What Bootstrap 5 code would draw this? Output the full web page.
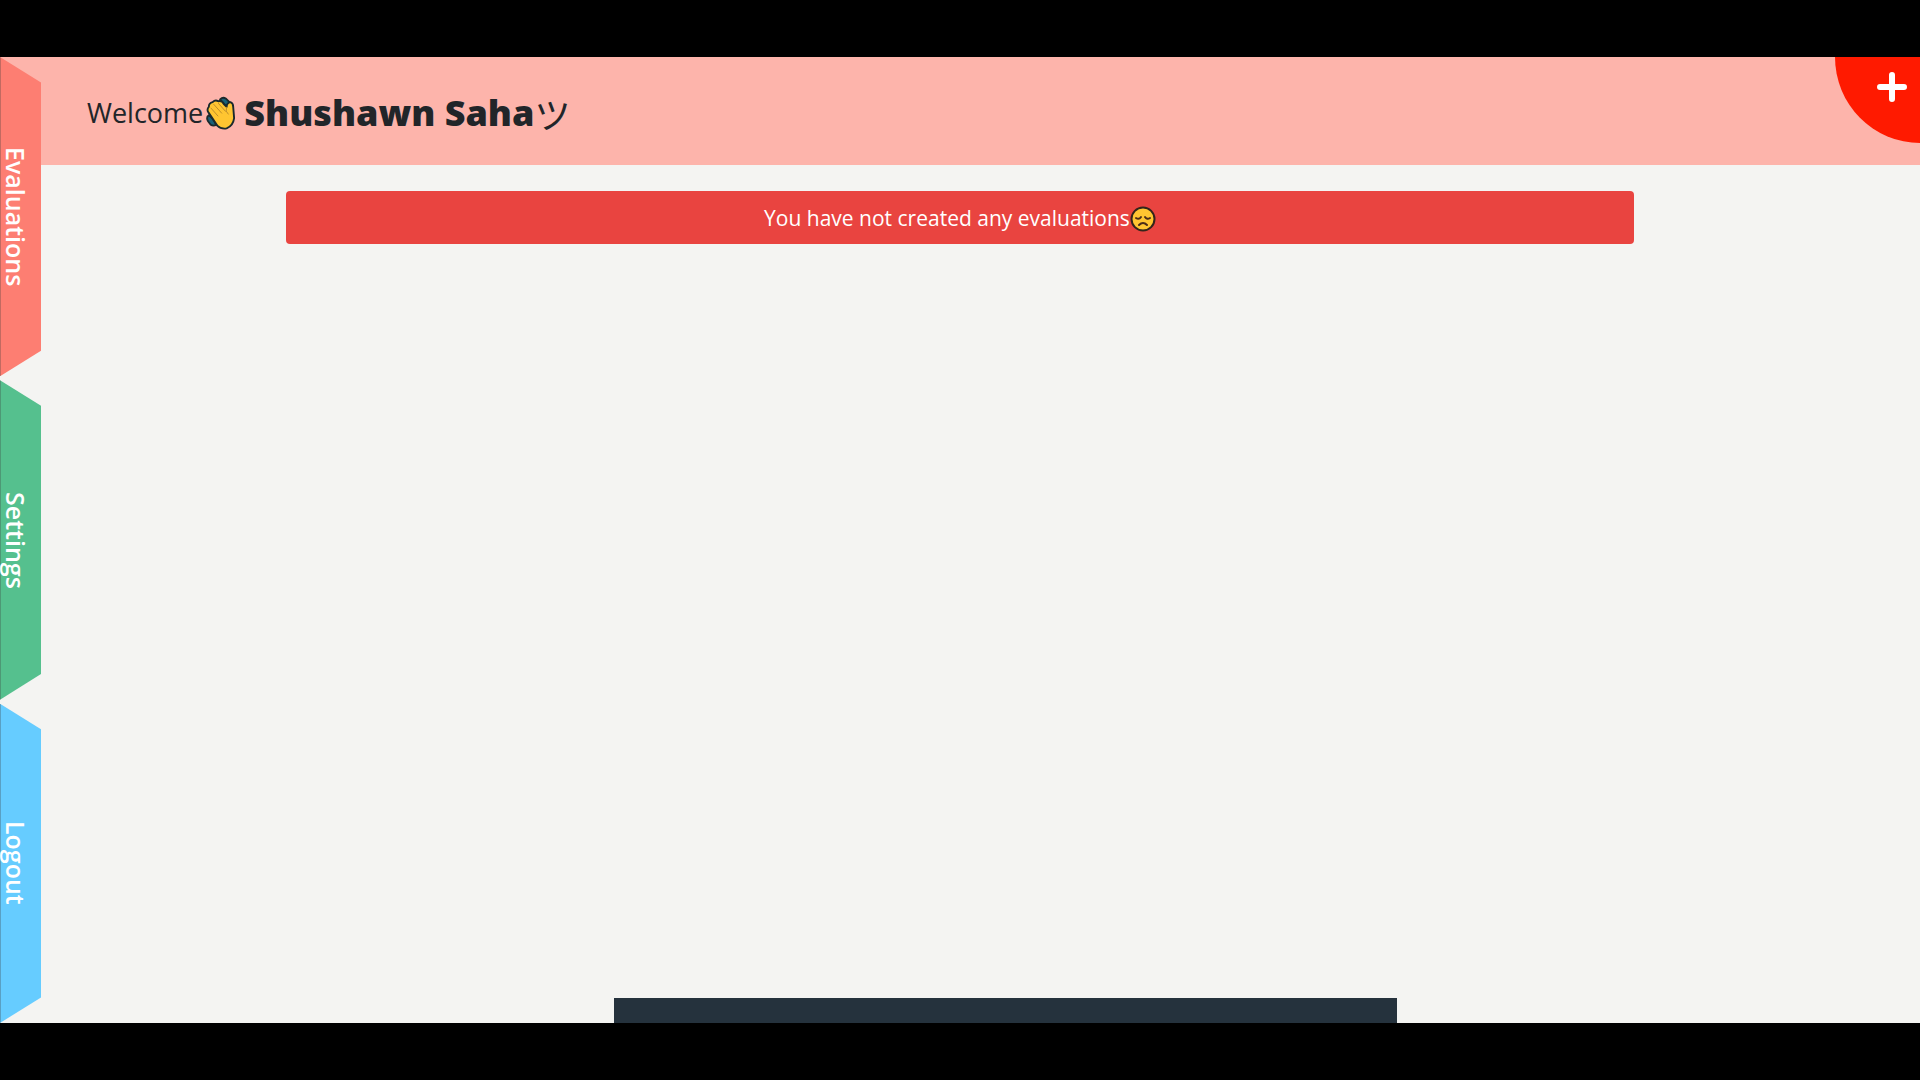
<!DOCTYPE html>
<html lang="en">
<head>
<meta charset="utf-8">
<meta name="viewport" content="width=device-width, initial-scale=1">
<title>Evaluations</title>
<link href="https://cdn.jsdelivr.net/npm/bootstrap@5.3.0/dist/css/bootstrap.min.css" rel="stylesheet">
<style>
  body { background: #000; color: #212529; font-family: "Open Sans", "Noto Sans", "Noto Sans CJK JP", sans-serif; padding: 57px 0; }
  .stage { background: #f4f4f2; }
  .topbar { background: #fdb4ab; min-height: 108px; padding: 3px 120px 0 87px; }
  .greeting { font-size: 27px; line-height: 36px; font-weight: 500; }
  .greeting svg { width: 30px; height: 35px; margin: 0 8px 0 3px; }
  .owner { font-size: 36px; font-weight: 800; line-height: 44px; }
  .owner-mark { font-family: "Noto Sans CJK JP", sans-serif; font-size: 36px; font-weight: 400; line-height: 44px; }
  .side { width: 41px; gap: 4px; }
  .side a { color: #fff; font-size: 25px; font-weight: 600; line-height: 28px; writing-mode: vertical-rl; clip-path: polygon(0 0, 100% 8%, 100% 92%, 0 100%); flex: 1 1 0; padding-right: 10px; border-left: 1px solid rgba(60, 60, 60, .3); }
  .tab-evaluations { background: #fd7e72; }
  .tab-settings { background: #55c08e; }
  .tab-logout { background: #66ccff; }
  .add-btn { width: 85px; height: 86px; background: #ff1a00; border: 0; border-radius: 0 0 0 100%; padding: 0 13px 26px 0; }
  .content-wrap { max-width: 1348px; margin-top: 26px; }
  .notice { background: #e94440; color: #fff; font-size: 21px; line-height: 27px; padding: 14px 12px 12px; border-radius: 4px; }
  .notice svg { width: 26px; height: 26px; }
  .drawer { width: 783px; max-width: 80%; height: 25px; background: #25323d; margin-left: 32%; }
</style>
<script src="https://cdn.jsdelivr.net/npm/bootstrap@5.3.0/dist/js/bootstrap.bundle.min.js"></script>
</head>
<body class="min-vh-100 d-flex flex-column">
<div class="stage position-relative flex-grow-1 d-flex flex-column overflow-hidden">
  <header class="topbar d-flex align-items-center">
    <h1 class="greeting d-flex align-items-center m-0">
      <span>Welcome</span>
      <svg viewBox="0 0 32 36" aria-hidden="true">
        <g stroke="#1b2a2d" stroke-width="2" stroke-linejoin="round" stroke-linecap="round">
          <path d="M15 4q3-3 6-1l4 4q2 3 0 6l-4-2z" fill="#186078"/>
          <path d="M3 21q-3 2-1 6l3 4q3 2 6 0l-4-7z" fill="#186078"/>
          <path d="M4 20l-2-3q-1-3 1-5 0-4 4-5 3-3 6-1 4-1 6 3l3 3q0-4 4-5 3 1 3 5l1 12q-1 8-8 11-6 1-10-3z" fill="#ffc531"/>
        </g>
        <path d="M5 13l8 9M8 9l9 10M13 8l8 9M22 12q-2 5 2 8" fill="none" stroke="#b98a2a" stroke-width="1"/>
      </svg>
      <span class="owner">Shushawn Saha</span><span class="owner-mark">ツ</span>
    </h1>
  </header>

  <main class="content-wrap w-100 mx-auto flex-grow-1">
    <div class="notice d-flex justify-content-center align-items-center" role="alert">
      <span>You have not created any evaluations</span>
      <svg viewBox="0 0 26 26" aria-hidden="true">
        <circle cx="13" cy="13" r="11.5" fill="#ffc531" stroke="#33251b" stroke-width="2"/>
        <path d="M6 12q3 2 5-1M15 11q2 3 5 1M9 19q4-4 8 0" fill="none" stroke="#4b2d18" stroke-width="2" stroke-linecap="round"/>
      </svg>
    </div>
  </main>

  <div class="drawer"></div>

  <nav class="side position-absolute top-0 start-0 h-100 d-flex flex-column" aria-label="Main">
    <a class="tab-evaluations d-flex align-items-center justify-content-center text-decoration-none" href="#evaluations">Evaluations</a>
    <a class="tab-settings d-flex align-items-center justify-content-center text-decoration-none" href="#settings">Settings</a>
    <a class="tab-logout d-flex align-items-center justify-content-center text-decoration-none" href="#logout">Logout</a>
  </nav>

  <button class="add-btn position-absolute top-0 end-0 d-flex align-items-center justify-content-end" type="button" aria-label="Add evaluation">
    <svg width="30" height="30" viewBox="0 0 30 30" aria-hidden="true"><path d="M15 3v24M3 15h24" stroke="#fff" stroke-width="6" stroke-linecap="round"/></svg>
  </button>
</div>
</body>
</html>
